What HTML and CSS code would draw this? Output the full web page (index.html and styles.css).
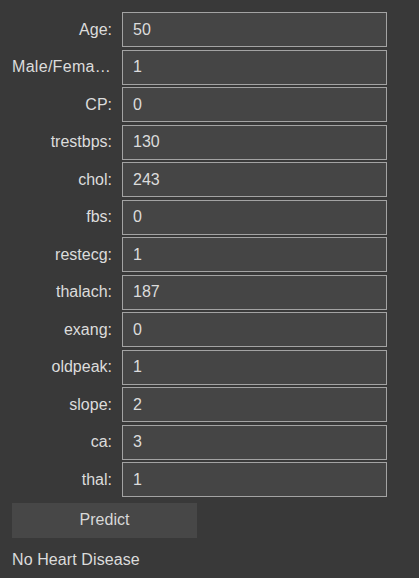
FILE: index.html
```html
<!DOCTYPE html>
<html>
<head>
<meta charset="utf-8">
<link rel="stylesheet" href="styles.css">
</head>
<body>
<div class="page">
  <div class="form">
    <label class="lbl">Age:</label><input class="field" value="50">
    <label class="lbl lbl-long">Male/Female:</label><input class="field" value="1">
    <label class="lbl">CP:</label><input class="field" value="0">
    <label class="lbl">trestbps:</label><input class="field" value="130">
    <label class="lbl">chol:</label><input class="field" value="243">
    <label class="lbl">fbs:</label><input class="field" value="0">
    <label class="lbl">restecg:</label><input class="field" value="1">
    <label class="lbl">thalach:</label><input class="field" value="187">
    <label class="lbl">exang:</label><input class="field" value="0">
    <label class="lbl">oldpeak:</label><input class="field" value="1">
    <label class="lbl">slope:</label><input class="field" value="2">
    <label class="lbl">ca:</label><input class="field" value="3">
    <label class="lbl">thal:</label><input class="field" value="1">
  </div>
  <button class="predict">Predict</button>
  <div class="result">No Heart Disease</div>
</div>
</body>
</html>
```
FILE: styles.css
```css
html, body {
  margin: 0;
  padding: 0;
  background: #393939;
  height: 100%;
}
body {
  font-family: "Liberation Sans", Arial, sans-serif;
  font-size: 16px;
  color: #dcdcdc;
}
.page {
  padding: 12px;
}
.form {
  display: grid;
  grid-template-columns: 100px 265px;
  column-gap: 10px;
  row-gap: 2.5px;
  align-items: center;
}
.lbl {
  text-align: right;
  white-space: nowrap;
  overflow: hidden;
  text-overflow: ellipsis;
}
.lbl-long {
  letter-spacing: 0.3px;
}
.field {
  box-sizing: border-box;
  width: 265px;
  height: 35px;
  margin: 0;
  padding: 0 10px;
  border: 1px solid #a3a3a3;
  background: #454545;
  color: #dcdcdc;
  font-family: inherit;
  font-size: 16px;
  outline: none;
}
.predict {
  display: block;
  margin-top: 5.5px;
  width: 185px;
  height: 35px;
  border: none;
  background: #474747;
  color: #d8d8d8;
  font-family: inherit;
  font-size: 16px;
  padding: 0;
}
.result {
  margin-top: 13px;
  line-height: 18px;
  letter-spacing: 0.1px;
}
```
